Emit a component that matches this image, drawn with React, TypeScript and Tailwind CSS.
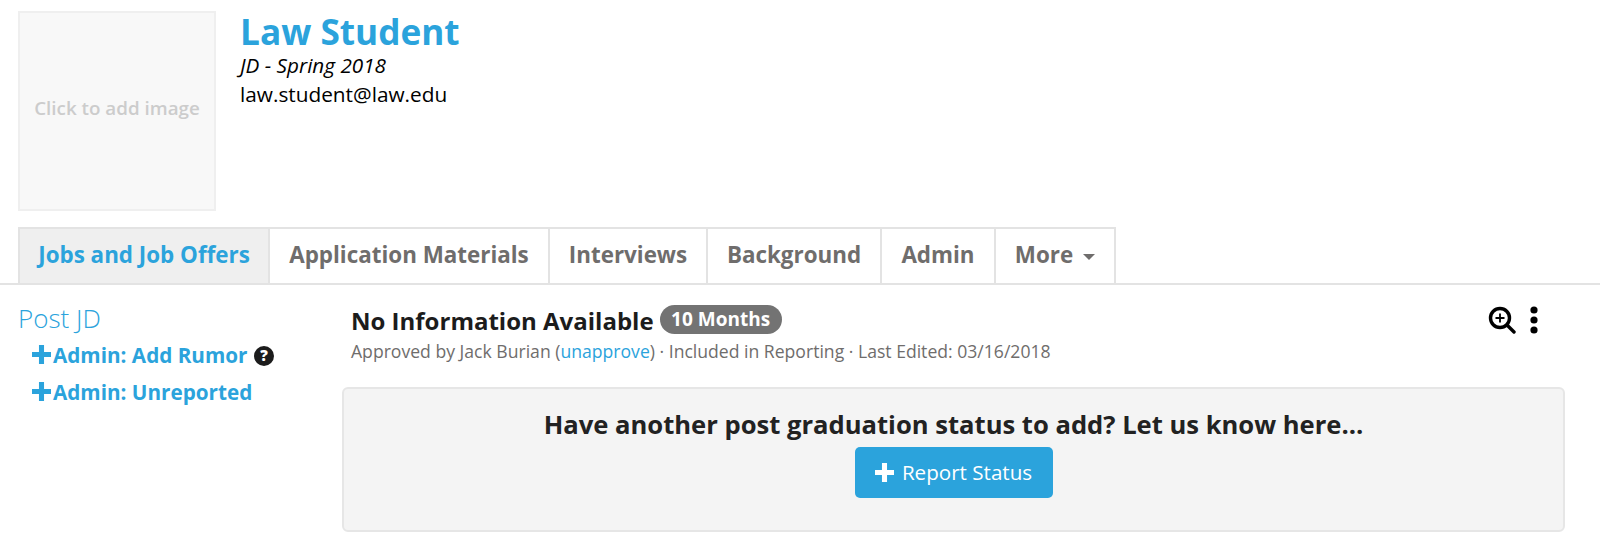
const tabs = [
  { label: "Jobs and Job Offers", w: "w-[252px]", active: true },
  { label: "Application Materials", w: "w-[282px]" },
  { label: "Interviews", w: "w-[160px]" },
  { label: "Background", w: "w-[176px]" },
  { label: "Admin", w: "w-[116px]" },
];

function Plus({ className }: { className: string }) {
  return (
    <svg viewBox="0 0 18 18" className={className} fill="currentColor">
      <path d="M6.6 0h4.8v6.6H18v4.8h-6.6V18H6.6v-6.6H0V6.6h6.6z" />
    </svg>
  );
}

export default function App() {
  return (
    <div className="w-[1600px] h-[547px] overflow-hidden bg-white font-['Open_Sans',sans-serif] text-[#111]">
      <div className="flex pl-[18px] pt-[11px] h-[227px]">
        <div className="w-[198px] h-[200px] border-2 border-[#efefef] bg-[#f8f8f8] flex justify-center pt-[83px]">
          <span className="text-[18.8px] leading-[24px] font-semibold text-[#cccccc] whitespace-nowrap">Click to add image</span>
        </div>
        <div className="ml-[24px] -mt-[1px]">
          <div className="text-[35.2px] leading-[42px] font-bold text-[#2ba3dc]">Law Student</div>
          <div className="text-[20.7px] leading-[27px] italic text-black">JD - Spring 2018</div>
          <div className="text-[20.8px] leading-[29px] text-black mt-[1px]">law.student@law.edu</div>
        </div>
      </div>

      <div className="border-b-2 border-[#e3e3e3] h-[58px] pl-[18px] flex">
        {tabs.map((t) => (
          <div
            key={t.label}
            className={`${t.w} h-[58px] border-2 -mr-[2px] pb-[2px] border-[#e3e3e3] flex items-center justify-center text-[22.4px] font-bold ${
              t.active ? "bg-[#efefef] text-[#2ba3dc]" : "bg-white text-[#6f6d6c]"
            }`}
          >
            {t.label}
          </div>
        ))}
        <div className="w-[122px] h-[58px] border-2 pb-[2px] border-[#e3e3e3] bg-white flex items-center justify-center gap-[10px] text-[22.4px] font-bold text-[#6f6d6c]">
          More
          <span className="mt-[4px] w-0 h-0 border-x-[6px] border-x-transparent border-t-[6px] border-t-[#6f6d6c]" />
        </div>
      </div>

      <div className="flex pl-[18px]">
        <div className="w-[324px] shrink-0 pt-[16px]">
          <div className="text-[26px] leading-[34px] font-light text-[#2ba3dc]">Post JD</div>
          <div className="mt-[4px] pl-[14px] flex items-center h-[34px] text-[20.7px] font-bold text-[#2ba3dc]">
            <Plus className="w-[19px] h-[19px] -mt-[3px] mr-[2px]" />
            <span>Admin: Add Rumor</span>
            <svg viewBox="0 0 20 20" className="ml-[7px] w-[20px] h-[20px]">
              <circle cx="10" cy="10" r="10" fill="#1c1c1c" />
              <text x="10" y="15" textAnchor="middle" fontSize="15" fontWeight="800" fill="#fff" fontFamily="Open Sans, sans-serif">?</text>
            </svg>
          </div>
          <div className="mt-[3px] pl-[14px] flex items-center h-[34px] text-[20.7px] font-bold text-[#2ba3dc]">
            <Plus className="w-[19px] h-[19px] -mt-[3px] mr-[2px]" />
            <span>Admin: Unreported</span>
          </div>
        </div>

        <div className="w-[1223px] pt-[19px]">
          <div className="flex pl-[9px]">
            <div className="flex-1">
              <div className="flex items-center h-[34px]">
                <span className="text-[24px] font-bold text-[#1c1c1c]">No Information Available</span>
                <span className="ml-[6px] -mt-[3px] h-[29px] w-[122px] justify-center rounded-full bg-[#737373] text-white text-[19px] font-bold flex items-center">10 Months</span>
              </div>
              <div className="text-[17.6px] leading-[24px] text-[#6f6d6c] mt-[1px]">
                Approved by Jack Burian (<span className="text-[#2ba3dc]">unapprove</span>) · Included in Reporting · Last Edited: 03/16/2018
              </div>
            </div>
            <div className="flex items-start pr-[27px] pt-[2px] gap-[14px]">
              <svg viewBox="0 0 28 28" className="w-[28px] h-[28px]" fill="none" stroke="#000">
                <circle cx="12" cy="12" r="9.5" strokeWidth="3.4" />
                <path d="M19 19l7 7" strokeWidth="3.4" strokeLinecap="round" />
                <path d="M12 7.5v9M7.5 12h9" strokeWidth="1.8" />
              </svg>
              <svg viewBox="0 0 8 28" className="w-[8px] h-[28px]" fill="#000">
                <circle cx="4" cy="4" r="3.6" />
                <circle cx="4" cy="14" r="3.6" />
                <circle cx="4" cy="24" r="3.6" />
              </svg>
            </div>
          </div>

          <div className="mt-[24px] h-[145px] w-[1223px] rounded-[6px] border-2 border-[#e6e6e6] bg-[#f4f4f4] flex flex-col items-center pt-[19px]">
            <div className="text-[25.6px] leading-[34px] font-bold text-[#222]">Have another post graduation status to add? Let us know here...</div>
            <div className="mt-[5px] w-[198px] h-[51px] rounded-[5px] bg-[#2ba3dc] text-white text-[20.6px] font-medium flex items-center justify-center gap-[8px]">
              <Plus className="w-[19px] h-[19px]" />
              <span>Report Status</span>
            </div>
          </div>
        </div>
      </div>
    </div>
  );
}
